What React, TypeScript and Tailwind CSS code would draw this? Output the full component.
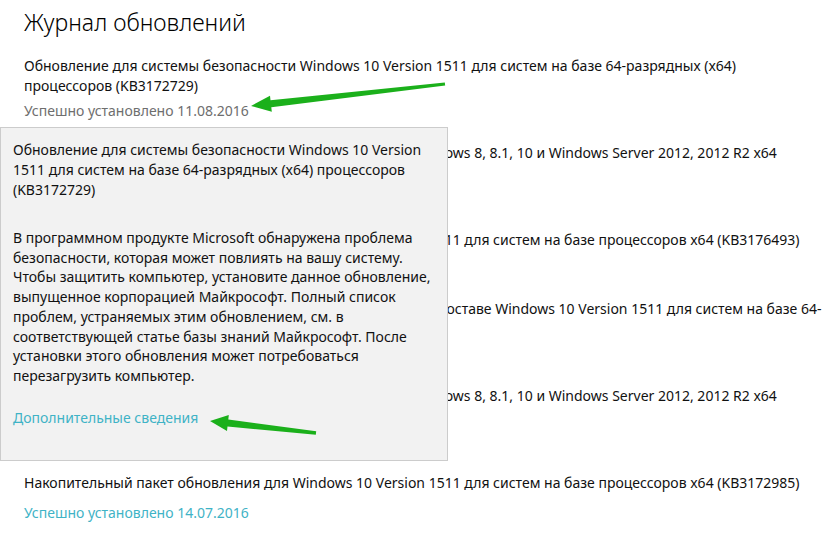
const items = [
  {
    lines: [
      "Обновление для системы безопасности Windows 10 Version 1511 для систем на базе 64-разрядных (x64)",
      "процессоров (KB3172729)",
    ],
    status: "Успешно установлено 11.08.2016",
  },
  {
    lines: [
      "Обновление для системы безопасности Flash Player для Windows 8, 8.1, 10 и Windows Server 2012, 2012 R2 x64",
      "(KB3174060)",
    ],
    status: "Успешно установлено 11.08.2016",
  },
  {
    lines: [
      "Накопительный пакет обновления для Windows 10 Version 1511 для систем на базе процессоров x64 (KB3176493)",
    ],
    status: "Успешно установлено 11.08.2016",
  },
  {
    lines: [
      "Обновление для системы безопасности Adobe Flash Player в составе Windows 10 Version 1511 для систем на базе 64-",
      "разрядных (x64) процессоров (KB3174060)",
    ],
    status: "Успешно установлено 14.07.2016",
  },
  {
    lines: [
      "Обновление для системы безопасности Flash Player для Windows 8, 8.1, 10 и Windows Server 2012, 2012 R2 x64",
      "(KB3167685)",
    ],
    status: "Успешно установлено 14.07.2016",
  },
];

export default function App() {
  return (
    <div className="relative w-[833px] h-[539px] overflow-hidden bg-white font-['Noto_Sans',sans-serif] text-[#111]">
      <div className="pl-6 pt-[6px]">
        <h1 className="text-[23px] leading-[32px] font-light text-black">Журнал обновлений</h1>

        <div className="mt-[18px] flex flex-col gap-[22px]">
          {items.map((it, i) => (
            <div key={i} className={`flex flex-col gap-[5px] ${it.lines.length === 1 ? "mb-[2px]" : ""}`}>
              <div className="text-[14px] leading-[20px] whitespace-nowrap">
                {it.lines.map((l, j) => (
                  <div key={j}>{l}</div>
                ))}
              </div>
              <div className="text-[14px] leading-[20px] text-[#6e6e6e]">{it.status}</div>
            </div>
          ))}
          <div className="flex flex-col gap-[10px]">
            <div className="text-[14px] leading-[20px] whitespace-nowrap">
              Накопительный пакет обновления для Windows 10 Version 1511 для систем на базе процессоров x64 (KB3172985)
            </div>
            <div className="text-[14px] leading-[20px] text-[#3fb3c6]">Успешно установлено 14.07.2016</div>
          </div>
        </div>
      </div>

      {/* всплывающая подсказка */}
      <div className="absolute left-0 top-[127px] w-[448px] h-[334px] bg-[#f2f2f2] border border-[#cccccc] px-3 pt-[12px] text-[14px] leading-[20px] text-[#111]">
        <p>
          Обновление для системы безопасности Windows 10 Version 1511 для систем на базе 64-разрядных (x64) процессоров
          (KB3172729)
        </p>
        <p className="mt-[28px] leading-[19.7px]">
          В программном продукте Microsoft обнаружена проблема безопасности, которая может повлиять на вашу систему.
          Чтобы защитить компьютер, установите данное обновление, выпущенное корпорацией Майкрософт. Полный список
          проблем, устраняемых этим обновлением, см. в соответствующей статье базы знаний Майкрософт. После установки
          этого обновления может потребоваться перезагрузить компьютер.
        </p>
        <div className="mt-[22px] text-[#3fb3c6]">Дополнительные сведения</div>
      </div>

      {/* стрелки */}
      <svg className="absolute left-0 top-0 pointer-events-none" width="833" height="539">
        <polygon
          fill="#1bb01b"
          points="251,106 270,95.7 270.5,100.2 444.8,82.5 445.2,85.5 271.3,107.2 271.8,111.7"
        />
        <polygon
          fill="#1bb01b"
          points="210,421 228.8,415 228.3,419.5 316.2,431.2 315.8,434.8 227.5,426.5 227,431"
        />
      </svg>
    </div>
  );
}
